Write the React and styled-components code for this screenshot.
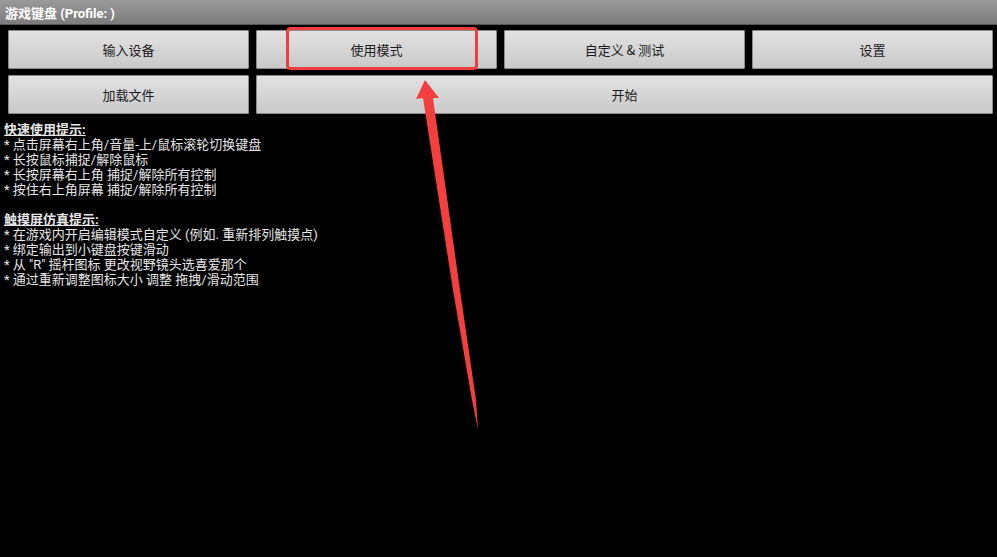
import React from "react";
import styled, { createGlobalStyle } from "styled-components";

const GlobalStyle = createGlobalStyle`
  html, body {
    margin: 0;
    padding: 0;
    background: #000;
  }
  body {
    font-family: "Roboto", "Noto Sans CJK SC", sans-serif;
  }
`;

const topButtons = ["输入设备", "使用模式", "自定义 & 测试", "设置"];

const quickTips = [
  "* 点击屏幕右上角/音量-上/鼠标滚轮切换键盘",
  "* 长按鼠标捕捉/解除鼠标",
  "* 长按屏幕右上角 捕捉/解除所有控制",
  "* 按住右上角屏幕 捕捉/解除所有控制",
];

const touchTips = [
  "* 在游戏内开启编辑模式自定义 (例如. 重新排列触摸点)",
  "* 绑定输出到小键盘按键滑动",
  "* 从 \"R\" 摇杆图标 更改视野镜头选喜爱那个",
  "* 通过重新调整图标大小 调整 拖拽/滑动范围",
];

export default function App() {
  return (
    <Screen>
      <GlobalStyle />
      <TitleBar>游戏键盘 (Profile: )</TitleBar>
      <ButtonGrid>
        {topButtons.map((label) => (
          <MenuButton key={label}>{label}</MenuButton>
        ))}
        <MenuButton>加载文件</MenuButton>
        <MenuButton $span={3}>开始</MenuButton>
      </ButtonGrid>
      <Hints>
        <HintTitle>快速使用提示:</HintTitle>
        {quickTips.map((t) => (
          <HintLine key={t}>{t}</HintLine>
        ))}
        <Spacer />
        <HintTitle>触摸屏仿真提示:</HintTitle>
        {touchTips.map((t) => (
          <HintLine key={t}>{t}</HintLine>
        ))}
      </Hints>
      <Markup width="997" height="557" viewBox="0 0 997 557">
        <rect x="287.5" y="28.5" width="189" height="40" rx="3" fill="none" stroke="#f03e3e" strokeWidth="3" />
        {/* callout arrow, tapering tail */}
        <polygon
          points="425,80 439,98 433,98 460,290 476,400 478,430 472,400 453,290 423,98 416,99"
          fill="#f43f3f"
        />
      </Markup>
    </Screen>
  );
}

const Screen = styled.div`
  position: relative;
  width: 997px;
  height: 557px;
  background: #000;
  overflow: hidden;
`;

const TitleBar = styled.div`
  height: 24px;
  display: flex;
  align-items: center;
  padding-left: 5px;
  background: linear-gradient(#9a9a9a, #7c7c7c);
  border-bottom: 1px solid #555;
  color: #fff;
  font-weight: bold;
  font-size: 13px;
  font-family: "Roboto", "Noto Sans CJK SC", sans-serif;
`;

const ButtonGrid = styled.div`
  display: grid;
  grid-template-columns: repeat(4, 1fr);
  column-gap: 7px;
  row-gap: 6px;
  padding: 5px 4px 0 8px;
`;

const MenuButton = styled.div`
  grid-column: span ${(p) => p.$span || 1};
  height: 37px;
  display: flex;
  align-items: center;
  justify-content: center;
  background: linear-gradient(#e2e2e2, #c9c9c9);
  border: 1px solid #8c8c8c;
  border-radius: 1px;
  color: #1c1c1c;
  font-size: 13px;
  font-family: "Noto Sans CJK SC", sans-serif;
`;

const Hints = styled.div`
  padding: 8px 0 0 4px;
  color: #e6e6e6;
  font-size: 13px;
  line-height: 15px;
  font-family: "Roboto", "Noto Sans CJK SC", sans-serif;
`;

const HintTitle = styled.div`
  font-weight: bold;
  text-decoration: underline;
`;

const HintLine = styled.div``;

const Spacer = styled.div`
  height: 15px;
`;

const Markup = styled.svg`
  position: absolute;
  top: 0;
  left: 0;
  pointer-events: none;
`;
